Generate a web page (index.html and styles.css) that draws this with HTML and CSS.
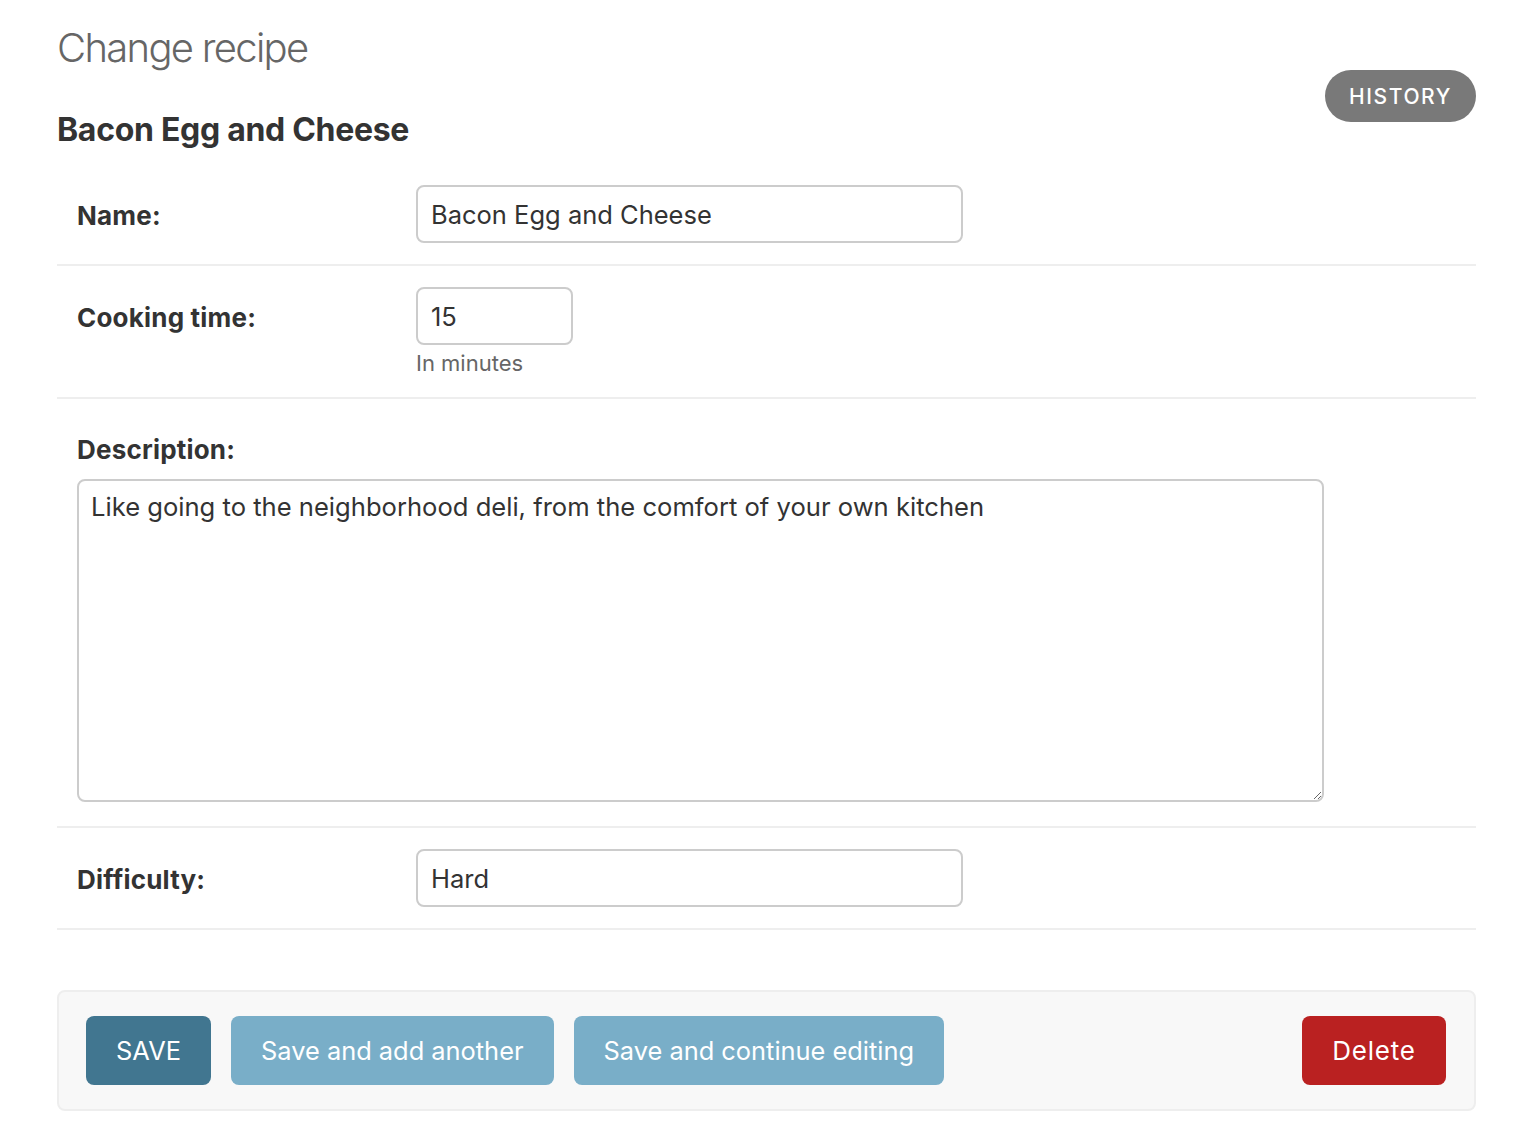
FILE: index.html
```html
<!DOCTYPE html>
<html lang="en">
<head>
<meta charset="utf-8">
<title>Change recipe</title>
<link rel="stylesheet" href="styles.css">
</head>
<body>
<div class="content">
  <h1 class="page-title">Change recipe</h1>
  <div class="header-row">
    <h2 class="object-title">Bacon Egg and Cheese</h2>
    <a class="history-btn" href="#">HISTORY</a>
  </div>
  <form class="form">
    <div class="form-row">
      <label class="label">Name:</label>
      <div class="field">
        <input class="input input-wide" type="text" value="Bacon Egg and Cheese">
      </div>
    </div>
    <div class="form-row">
      <label class="label">Cooking time:</label>
      <div class="field">
        <input class="input input-small" type="text" value="15">
        <div class="help">In minutes</div>
      </div>
    </div>
    <div class="form-row form-row-stacked">
      <label class="label label-stacked">Description:</label>
      <textarea class="textarea">Like going to the neighborhood deli, from the comfort of your own kitchen</textarea>
    </div>
    <div class="form-row">
      <label class="label">Difficulty:</label>
      <div class="field">
        <input class="input input-wide" type="text" value="Hard">
      </div>
    </div>
    <div class="submit-row">
      <button type="button" class="btn btn-default">SAVE</button>
      <button type="button" class="btn btn-light">Save and add another</button>
      <button type="button" class="btn btn-light">Save and continue editing</button>
      <span class="spacer"></span>
      <button type="button" class="btn btn-delete">Delete</button>
    </div>
  </form>
</div>
</body>
</html>
```

FILE: styles.css
```css
* { box-sizing: border-box; }
html, body { margin: 0; padding: 0; background: #fff; }
body {
  font-family: Inter, "Noto Sans", "Liberation Sans", sans-serif;
  color: #333;
}
.content {
  padding: 24px 54px 0 57px;
}
.page-title {
  margin: 0;
  font-size: 40px;
  font-weight: 300;
  color: #666;
  line-height: 48px;
  letter-spacing: -1.7px;
}
.header-row {
  display: flex;
  justify-content: space-between;
  align-items: flex-start;
}
.object-title {
  margin: 38px 0 0 0;
  font-size: 32px;
  font-weight: 700;
  color: #333;
  line-height: 40px;
  letter-spacing: -0.3px;
}
.history-btn {
  margin-top: -2px;
  display: inline-flex;
  align-items: center;
  justify-content: center;
  width: 151px;
  height: 52px;
  border-radius: 26px;
  background: #797979;
  color: #fff;
  text-decoration: none;
  font-size: 21px;
  font-weight: 500;
  letter-spacing: 1.6px;
}
.form { margin-top: 14px; }
.form-row {
  display: flex;
  align-items: flex-start;
  padding: 21px 20px 21px 20px;
  border-bottom: 2px solid #eee;
}
.label {
  width: 339px;
  flex: none;
  padding-top: 2px;
  margin-bottom: -2px;
  font-size: 26px;
  font-weight: 700;
  color: #333;
  line-height: 58px;
  letter-spacing: 0.2px;
}
.field { display: flex; flex-direction: column; }
.input {
  height: 58px;
  border: 2px solid #ccc;
  border-radius: 8px;
  padding: 0 13px;
  font-family: inherit;
  font-size: 25.5px;
  color: #333;
  background: #fff;
}
.input-wide { width: 547px; }
.input-small { width: 157px; }
.help {
  margin-top: 6px;
  font-size: 22px;
  color: #666;
  line-height: 25px;
}
.form-row-stacked {
  flex-direction: column;
  padding-top: 34px;
  padding-bottom: 24px;
}
.label-stacked {
  padding-top: 0;
  line-height: 34px;
  margin-bottom: 12px;
}
.textarea {
  display: block;
  width: 1247px;
  height: 323px;
  border: 2px solid #ccc;
  border-radius: 8px;
  padding: 9px 12px;
  font-family: inherit;
  font-size: 25.6px;
  line-height: 34px;
  color: #333;
  resize: both;
}
.submit-row {
  display: flex;
  align-items: center;
  gap: 20px;
  margin-top: 60px;
  padding: 24px 28px 24px 27px;
  background: #f8f8f8;
  border: 2px solid #eee;
  border-radius: 8px;
}
.spacer { flex: 1; }
.btn {
  height: 69px;
  border: none;
  border-radius: 8px;
  padding: 0 30px;
  font-family: inherit;
  font-size: 25.4px;
  color: #fff;
  cursor: pointer;
}
.btn-default { background: #417690; width: 125px; padding: 0; }
.btn-light { background: #79aec8; }
.btn-delete { background: #ba2121; width: 144px; padding: 0; letter-spacing: 0.8px; font-size: 26px; }
```
